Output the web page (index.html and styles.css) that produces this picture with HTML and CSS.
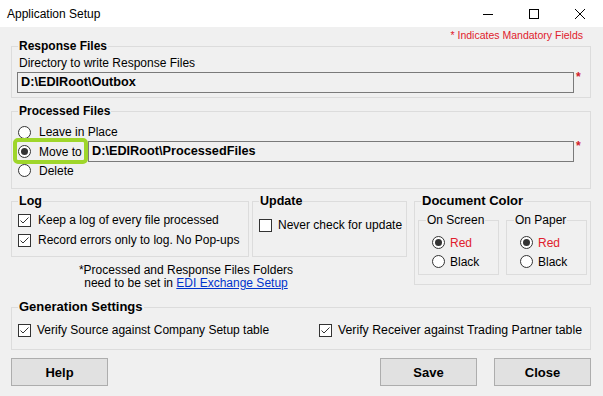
FILE: index.html
```html
<!DOCTYPE html>
<html lang="en">
<head>
    <meta charset="UTF-8">
    <meta name="viewport" content="width=device-width, initial-scale=1.0">
    <title>Application Setup</title>
    <link rel="stylesheet" href="styles.css">
</head>
<body>
    <div class="window">
        <div class="titlebar">
            <span class="title">Application Setup</span>
            <div class="caption">
                <span class="cap-btn"><svg width="10" height="10" viewBox="0 0 10 10"><path d="M0 5.5h10" stroke="#000" stroke-width="1"/></svg></span>
                <span class="cap-btn"><svg width="10" height="10" viewBox="0 0 10 10"><rect x="0.5" y="0.5" width="9" height="9" fill="none" stroke="#000" stroke-width="1"/></svg></span>
                <span class="cap-btn"><svg width="10" height="10" viewBox="0 0 10 10"><path d="M0 0L10 10M10 0L0 10" stroke="#000" stroke-width="1"/></svg></span>
            </div>
        </div>

        <div class="client">
            <div class="mandatory">* Indicates Mandatory Fields</div>

            <fieldset class="group response">
                <legend>Response Files</legend>
                <div class="dir-label">Directory to write Response Files</div>
                <div class="path-row response-path">
                    <div class="textbox">D:\EDIRoot\Outbox</div>
                    <span class="req">*</span>
                </div>
            </fieldset>

            <fieldset class="group processed">
                <legend>Processed Files</legend>
                <label class="option leave"><span class="radio"></span>Leave in Place</label>
                <div class="path-row move-row">
                    <label class="option move"><span class="radio on"></span>Move to</label>
                    <div class="textbox">D:\EDIRoot\ProcessedFiles</div>
                    <span class="req">*</span>
                    <span class="highlight"></span>
                </div>
                <label class="option delete"><span class="radio"></span>Delete</label>
            </fieldset>

            <div class="row3">
                <div class="left-col">
                    <div class="log-update">
                        <fieldset class="group log">
                            <legend>Log</legend>
                            <label class="check first"><span class="box"><svg width="11" height="11" viewBox="0 0 11 11"><path d="M1.5 5.5L4 8L9.5 2.5" fill="none" stroke="#333" stroke-width="1"/></svg></span>Keep a log of every file processed</label>
                            <label class="check"><span class="box"><svg width="11" height="11" viewBox="0 0 11 11"><path d="M1.5 5.5L4 8L9.5 2.5" fill="none" stroke="#333" stroke-width="1"/></svg></span>Record errors only to log. No Pop-ups</label>
                        </fieldset>
                        <fieldset class="group update">
                            <legend>Update</legend>
                            <label class="check"><span class="box"></span>Never check for update</label>
                        </fieldset>
                    </div>
                    <p class="note">*Processed and Response Files Folders<br>need to be set in <a href="#">EDI Exchange Setup</a></p>
                </div>

                <fieldset class="group doc-color">
                    <legend>Document Color</legend>
                    <div class="color-boxes">
                        <fieldset class="group sub">
                            <legend>On Screen</legend>
                            <label class="option color-opt first red"><span class="radio on"></span>Red</label>
                            <label class="option color-opt"><span class="radio"></span>Black</label>
                        </fieldset>
                        <fieldset class="group sub">
                            <legend>On Paper</legend>
                            <label class="option color-opt first red"><span class="radio on"></span>Red</label>
                            <label class="option color-opt"><span class="radio"></span>Black</label>
                        </fieldset>
                    </div>
                </fieldset>
            </div>

            <fieldset class="group generation">
                <legend>Generation Settings</legend>
                <div class="gen-row">
                    <label class="check source"><span class="box"><svg width="11" height="11" viewBox="0 0 11 11"><path d="M1.5 5.5L4 8L9.5 2.5" fill="none" stroke="#333" stroke-width="1"/></svg></span>Verify Source against Company Setup table</label>
                    <label class="check receiver"><span class="box"><svg width="11" height="11" viewBox="0 0 11 11"><path d="M1.5 5.5L4 8L9.5 2.5" fill="none" stroke="#333" stroke-width="1"/></svg></span>Verify Receiver against Trading Partner table</label>
                </div>
            </fieldset>

            <div class="buttons">
                <button>Help</button>
                <div class="right-buttons">
                    <button>Save</button>
                    <button>Close</button>
                </div>
            </div>
        </div>
    </div>
</body>
</html>
```

FILE: styles.css
```css
body {
    margin: 0;
    font-family: "Liberation Sans", Arial, sans-serif;
    font-size: 12px;
    color: #000;
    background-color: #f0f0f0;
}

.window {
    width: 603px;
    height: 396px;
    overflow: hidden;
}

.titlebar {
    height: 27px;
    background-color: #fff;
    display: flex;
    align-items: center;
    justify-content: space-between;
}

.title {
    padding-left: 7px;
}

.caption {
    display: flex;
    align-self: stretch;
}

.cap-btn {
    width: 46px;
    display: flex;
    align-items: center;
    justify-content: center;
}

.client {
    padding: 2px 12px 0 11px;
}

.mandatory {
    text-align: right;
    color: #e0202c;
    font-size: 10.5px;
    line-height: 12px;
    padding-right: 8px;
}

/* group boxes */
.group {
    border: 1px solid #dcdcdc;
    margin: 0;
    padding: 0;
    min-width: 0;
}

.group legend {
    font-weight: bold;
    font-size: 12.5px;
    line-height: 14px;
    padding: 0 1px;
    margin-left: 6px;
}

.response legend,
.processed legend {
    font-size: 12px;
}

.doc-color > legend,
.generation legend {
    font-size: 13px;
}

.response {
    margin-top: -2px;
    padding-bottom: 4px;
}

.dir-label {
    margin: 3px 0 0 7px;
    line-height: 14px;
}

.path-row {
    display: flex;
    align-items: flex-start;
}

.response-path {
    margin: 2px 0 0 5px;
}

.textbox {
    flex: 1;
    box-sizing: border-box;
    height: 21px;
    border: 1px solid #7a7a7a;
    padding: 0 3px;
    font-weight: bold;
    font-size: 12.7px;
    line-height: 19px;
    white-space: nowrap;
}

.req {
    width: 16px;
    box-sizing: border-box;
    padding-left: 2px;
    color: #d0202a;
    font-weight: bold;
    line-height: 11px;
}

.processed {
    margin-top: 6px;
    padding-bottom: 9px;
}

/* radio buttons */
.option {
    display: flex;
    align-items: center;
}

.radio {
    width: 13px;
    height: 13px;
    box-sizing: border-box;
    border: 1px solid #333;
    border-radius: 50%;
    background-color: #fff;
    display: flex;
    align-items: center;
    justify-content: center;
    flex: none;
    margin: 0 8px 0 6px;
}

.radio.on::after {
    content: "";
    width: 7px;
    height: 7px;
    border-radius: 50%;
    background-color: #333;
}

.leave {
    margin-top: 5px;
    height: 18px;
}

.move-row {
    position: relative;
    align-items: center;
    height: 21px;
}

.move {
    width: 76px;
    flex: none;
}

.move-row .req {
    align-self: flex-start;
}

.highlight {
    position: absolute;
    left: 1px;
    top: -3px;
    width: 75px;
    height: 26px;
    box-sizing: border-box;
    border: 4px solid #9fd62b;
    border-radius: 5px;
    pointer-events: none;
}

.delete {
    height: 17px;
}

/* checkboxes */
.check {
    display: flex;
    align-items: center;
    height: 20px;
    white-space: nowrap;
}

.box {
    width: 13px;
    height: 13px;
    box-sizing: border-box;
    border: 1px solid #333;
    background-color: #fff;
    flex: none;
    margin: 0 7px 0 6px;
}

.box svg {
    display: block;
}

.row3 {
    display: flex;
    align-items: flex-start;
    margin-top: 5px;
}

.left-col {
    width: 396px;
}

.log-update {
    display: flex;
}

.log {
    width: 238px;
    box-sizing: border-box;
    padding-bottom: 6px;
}

.log .first {
    margin-top: 2px;
}

.update {
    width: 155px;
    box-sizing: border-box;
    margin-left: 3px;
}

.update .check {
    margin-top: 7px;
}

.update .box {
    margin-right: 6px;
}

.note {
    width: 350px;
    margin: 7px 0 0;
    text-align: center;
    line-height: 13px;
}

.note a {
    color: #0033cc;
}

.doc-color {
    width: 177px;
    box-sizing: border-box;
    margin-left: 7px;
    padding-bottom: 9px;
}

.color-boxes {
    display: flex;
    gap: 7px;
    margin: 5px 0 0 3px;
}

.group.sub {
    width: 81px;
    box-sizing: border-box;
    padding-bottom: 3px;
}

.group.sub legend {
    font-weight: normal;
    font-size: 12px;
    margin-left: 7px;
}

.color-opt {
    height: 19px;
}

.color-opt.first {
    margin-top: 6px;
}

.color-opt .radio {
    margin: 0 5px 0 13px;
}

.red {
    color: #e0202c;
}

.generation {
    margin-top: 10px;
    padding-bottom: 9px;
}

.gen-row {
    display: flex;
    margin-top: 6px;
}

.source {
    width: 301px;
}

.gen-row .box {
    margin-right: 6px;
}

.receiver {
    font-size: 12.3px;
}

.buttons {
    display: flex;
    justify-content: space-between;
    margin-top: 8px;
}

.right-buttons {
    display: flex;
    gap: 17px;
}

button {
    width: 97px;
    height: 28px;
    border: 1px solid #adadad;
    background-color: #e1e1e1;
    font-family: "Liberation Sans", Arial, sans-serif;
    font-weight: bold;
    font-size: 13px;
    color: #000;
    padding: 0;
}
```
